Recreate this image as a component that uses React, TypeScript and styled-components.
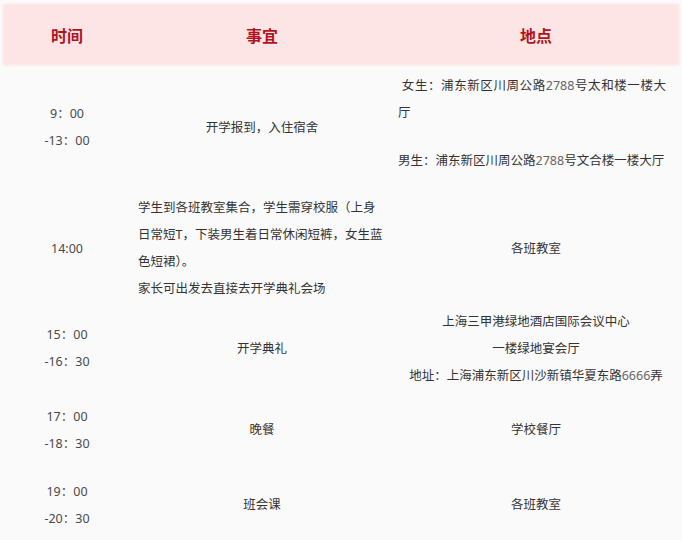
import React from "react";
import styled, { createGlobalStyle } from "styled-components";

const Global = createGlobalStyle`
  html, body { margin: 0; padding: 0; background: #fbfafa; }
  body { font-family: "Noto Sans", "Noto Sans CJK SC", sans-serif; }
`;

const Page = styled.div`
  width: 682px;
  height: 540px;
  padding: 5px 4px 0;
  box-sizing: border-box;
  overflow: hidden;
  background: #fbfafa;
`;

const COLS = "126px 264px 284px";

const HeadRow = styled.div`
  display: grid;
  grid-template-columns: ${COLS};
  height: 59px;
  background: #fde5e5;
  box-shadow: 0 0 3px 1px rgba(250, 215, 215, 0.7);
`;

const HeadCell = styled.div`
  display: flex;
  align-items: center;
  justify-content: center;
  padding-top: 1px;
  font-family: "Noto Sans CJK SC", sans-serif;
  font-weight: 700;
  font-size: 16px;
  color: #b3121f;
`;

const Row = styled.div<{ $h: number }>`
  display: grid;
  grid-template-columns: ${COLS};
  height: ${(p) => p.$h}px;
`;

const Cell = styled.div<{ $align?: "left" | "center"; $pad?: number }>`
  display: flex;
  flex-direction: column;
  justify-content: center;
  align-items: ${(p) => (p.$align === "left" ? "flex-start" : "center")};
  text-align: ${(p) => p.$align ?? "center"};
  padding: 0 ${(p) => p.$pad ?? 0}px;
  font-size: 12.5px;
  line-height: 27px;
  color: #333;
  white-space: nowrap;
`;

const TimeCell = styled(Cell)`
  color: #4a4a4a;
`;

const Para = styled.div<{ $gap?: number; $lift?: number }>`
  margin-top: ${(p) => p.$gap ?? 0}px;
  margin-bottom: ${(p) => p.$lift ?? 0}px;
`;

const JustLine = styled.div`
  width: 268px;
  text-align: justify;
  text-align-last: justify;
`;

const Num = styled.span`
  color: #666;
`;

export default function App() {
  return (
    <>
      <Global />
      <Page>
        <HeadRow>
          <HeadCell>时间</HeadCell>
          <HeadCell>事宜</HeadCell>
          <HeadCell>地点</HeadCell>
        </HeadRow>

        <Row $h={126}>
          <TimeCell>
            9：00
            <br />
            -13：00
          </TimeCell>
          <Cell>开学报到，入住宿舍</Cell>
          <Cell $align="left" $pad={4}>
            <div>
              <Para>
                <JustLine>
                  &nbsp;女生：浦东新区川周公路<Num>2788</Num>号太和楼一楼大
                </JustLine>
                <div>厅</div>
              </Para>
              <Para $gap={21} $lift={9}>
                男生：浦东新区川周公路<Num>2788</Num>号文合楼一楼大厅
              </Para>
            </div>
          </Cell>
        </Row>

        <Row $h={116}>
          <TimeCell>14:00</TimeCell>
          <Cell $align="left" $pad={8}>
            <div>
              学生到各班教室集合，学生需穿校服（上身
              <br />
              日常短T，下装男生着日常休闲短裤，女生蓝
              <br />
              色短裙）。
              <br />
              家长可出发去直接去开学典礼会场
            </div>
          </Cell>
          <Cell>各班教室</Cell>
        </Row>

        <Row $h={84}>
          <TimeCell>
            15：00
            <br />
            -16：30
          </TimeCell>
          <Cell>开学典礼</Cell>
          <Cell>
            <div>
              上海三甲港绿地酒店国际会议中心
              <br />
              一楼绿地宴会厅
              <br />
              地址：上海浦东新区川沙新镇华夏东路<Num>6666</Num>弄
            </div>
          </Cell>
        </Row>

        <Row $h={79}>
          <TimeCell>
            17：00
            <br />
            -18：30
          </TimeCell>
          <Cell>晚餐</Cell>
          <Cell>学校餐厅</Cell>
        </Row>

        <Row $h={71}>
          <TimeCell>
            19：00
            <br />
            -20：30
          </TimeCell>
          <Cell>班会课</Cell>
          <Cell>各班教室</Cell>
        </Row>
      </Page>
    </>
  );
}
